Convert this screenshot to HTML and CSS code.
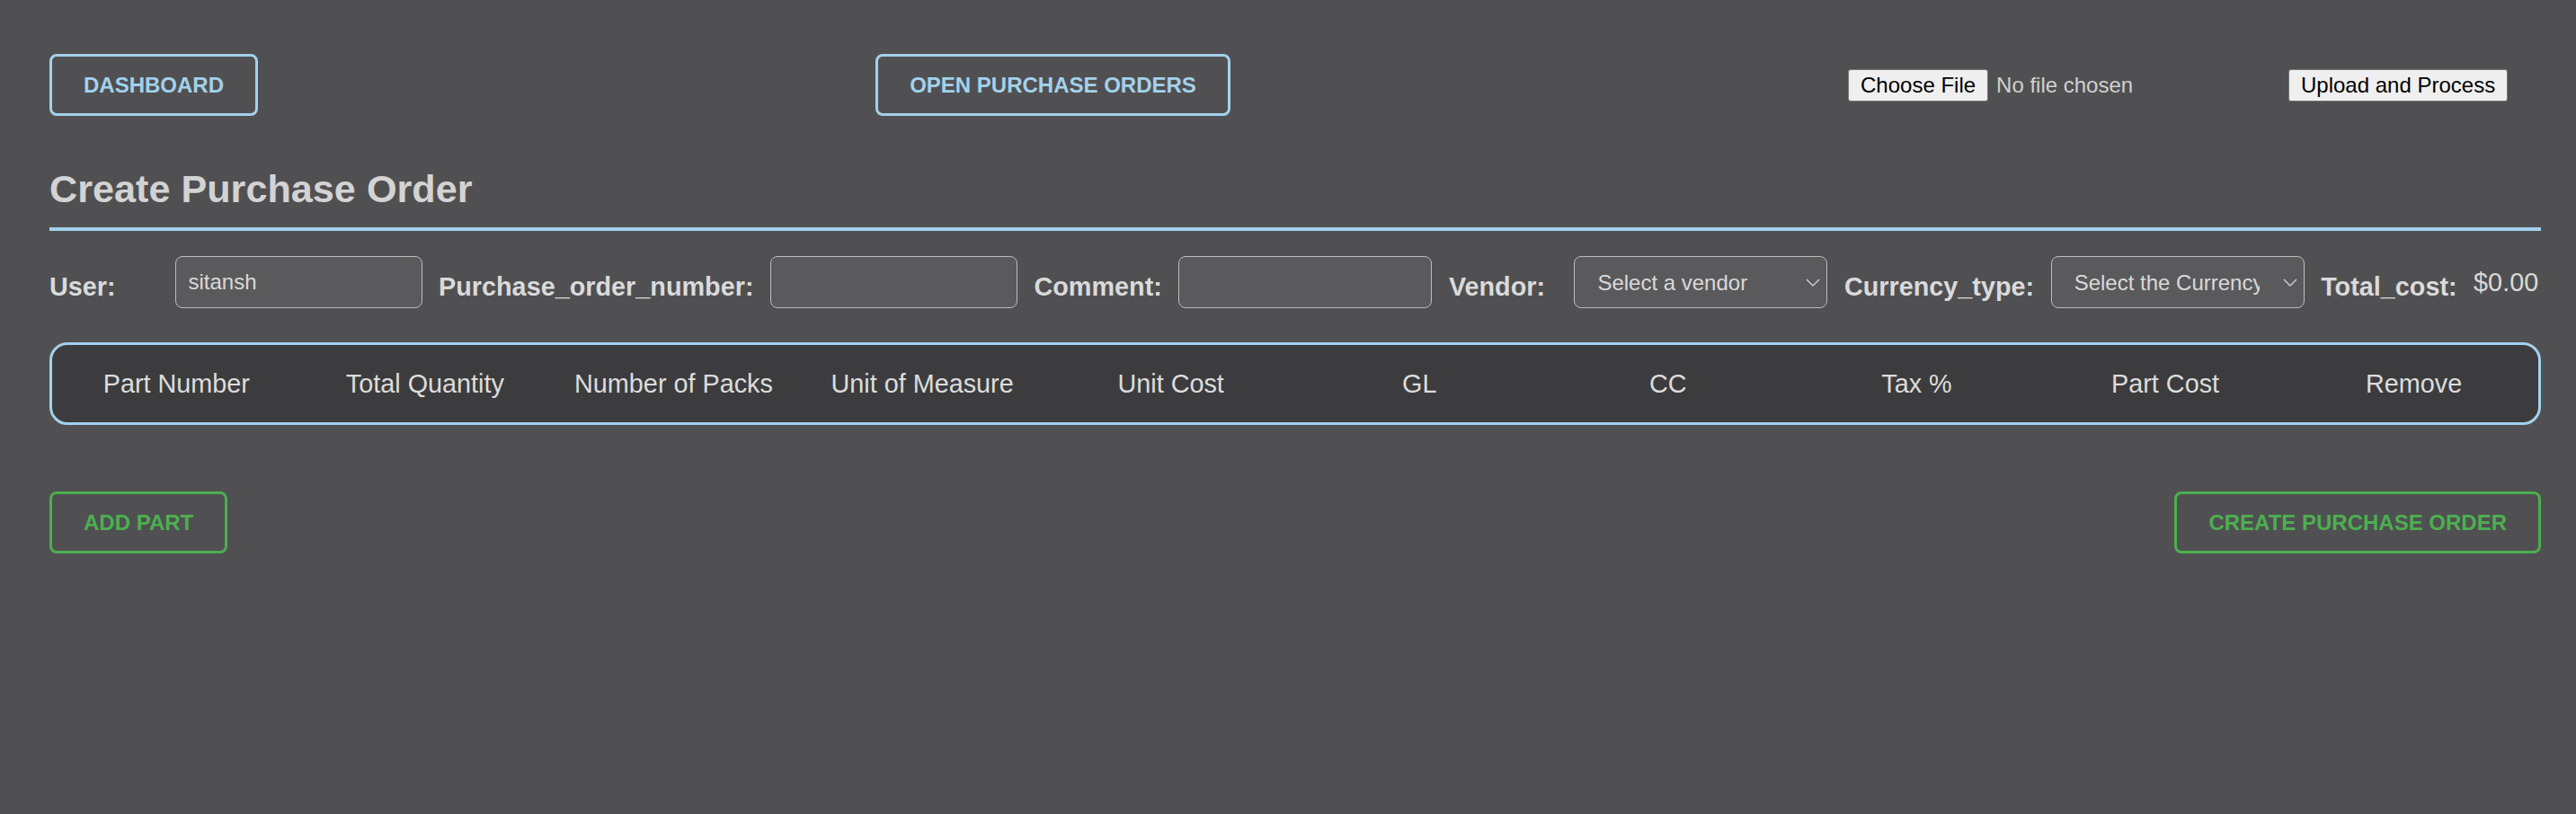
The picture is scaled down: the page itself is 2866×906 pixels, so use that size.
FILE: index.html
```html
<!DOCTYPE html>
<html lang="en">
<head>
<meta charset="utf-8">
<title>Create Purchase Order</title>
<link rel="stylesheet" href="styles.css">
</head>
<body>
<div class="page">
  <header class="topbar">
    <button class="btn btn-blue">DASHBOARD</button>
    <button class="btn btn-blue">OPEN PURCHASE ORDERS</button>
    <form class="upload-form">
      <label class="file-picker">
        <span class="file-btn">Choose File</span>
        <span class="file-name">No file chosen</span>
      </label>
      <button type="button" class="native-btn">Upload and Process</button>
    </form>
  </header>

  <h1 class="title">Create Purchase Order</h1>

  <div class="form-row">
    <label class="field-label min">User:</label>
    <input class="field-input" type="text" value="sitansh">
    <label class="field-label">Purchase_order_number:</label>
    <input class="field-input" type="text">
    <label class="field-label">Comment:</label>
    <input class="field-input wide" type="text">
    <label class="field-label min">Vendor:</label>
    <div class="select-wrap">
      <select class="field-select"><option>Select a vendor</option></select>
      <svg class="chevron" viewBox="0 0 16 9" width="16" height="9"><path d="M1 1 L8 8 L15 1" fill="none" stroke="#cfcfcf" stroke-width="1.4"/></svg>
    </div>
    <label class="field-label">Currency_type:</label>
    <div class="select-wrap">
      <select class="field-select"><option>Select the Currency</option></select>
      <svg class="chevron" viewBox="0 0 16 9" width="16" height="9"><path d="M1 1 L8 8 L15 1" fill="none" stroke="#cfcfcf" stroke-width="1.4"/></svg>
    </div>
    <label class="field-label">Total_cost:</label>
    <span class="total-value">$0.00</span>
  </div>

  <div class="parts-table">
    <table>
      <thead>
        <tr>
          <th>Part Number</th>
          <th>Total Quantity</th>
          <th>Number of Packs</th>
          <th>Unit of Measure</th>
          <th>Unit Cost</th>
          <th>GL</th>
          <th>CC</th>
          <th>Tax %</th>
          <th>Part Cost</th>
          <th>Remove</th>
        </tr>
      </thead>
    </table>
  </div>

  <div class="actions">
    <button class="btn btn-green">ADD PART</button>
    <button class="btn btn-green">CREATE PURCHASE ORDER</button>
  </div>
</div>
</body>
</html>
```

FILE: styles.css
```css
* { box-sizing: border-box; }

html, body {
  margin: 0;
  background: #505052;
}

body {
  font-family: "Liberation Sans", Arial, Helvetica, sans-serif;
  color: #d6d6d6;
  min-height: 906px;
}

.page {
  padding: 60px 39px 0 55px;
}

.topbar {
  display: flex;
  justify-content: space-between;
  align-items: center;
  height: 69px;
}

.btn {
  height: 69px;
  padding: 0 35px;
  background: transparent;
  border: 3px solid;
  border-radius: 8px;
  font-family: "Liberation Sans", Arial, Helvetica, sans-serif;
  font-size: 24px;
  font-weight: bold;
  line-height: 28px;
  white-space: nowrap;
}

.btn-blue {
  color: #a3d1ec;
  border-color: #a3d1ec;
}

.btn-green {
  color: #4caf50;
  border-color: #4caf50;
}

.upload-form {
  display: flex;
  align-items: center;
  width: 771px;
}

.file-picker {
  display: flex;
  align-items: center;
  width: 490px;
}

.file-btn,
.native-btn {
  display: inline-flex;
  align-items: center;
  height: 36px;
  padding: 0 13px;
  background: #efefef;
  color: #000;
  border: 1px solid #767676;
  border-radius: 3px;
  font-family: "Liberation Sans", Arial, Helvetica, sans-serif;
  font-size: 24px;
  white-space: nowrap;
}

.file-name {
  margin-left: 9px;
  font-size: 24px;
  color: #d0d0d0;
  white-space: nowrap;
}

.title {
  margin: 56px 0 0;
  font-size: 43.2px;
  line-height: 50px;
  font-weight: bold;
  color: #d3d3d3;
  padding-bottom: 18px;
  border-bottom: 4px solid #a3d1ec;
}

.form-row {
  display: flex;
  align-items: center;
  gap: 18.5px;
  margin-top: 28px;
  height: 58px;
}

.field-label {
  flex-shrink: 0;
  margin-top: 10px;
  font-size: 28.8px;
  line-height: 33px;
  font-weight: bold;
  color: #dadada;
  white-space: nowrap;
}

.field-label.min {
  min-width: 121px;
}

.field-input,
.field-select {
  flex-shrink: 0;
  width: 275px;
  height: 58px;
  padding: 0 14px;
  background: #5a5a5c;
  border: 1px solid #bdbdbd;
  border-radius: 8px;
  color: #d9d9d9;
  font-family: "Liberation Sans", Arial, Helvetica, sans-serif;
  font-size: 24px;
  outline: none;
}

.field-input.wide {
  width: 282px;
}

.select-wrap {
  position: relative;
  flex-shrink: 0;
  width: 282px;
  height: 58px;
}

.field-select {
  -webkit-appearance: none;
  appearance: none;
  width: 282px;
  padding: 0 49px 0 25px;
}

.chevron {
  position: absolute;
  right: 8px;
  top: 25px;
  pointer-events: none;
}

.total-value {
  flex-shrink: 0;
  font-size: 28.8px;
  line-height: 33px;
  color: #dadada;
  white-space: nowrap;
}

.parts-table {
  margin-top: 38px;
  height: 92px;
  background: #3c3c3e;
  border: 3px solid #a3d1ec;
  border-radius: 20px;
  overflow: hidden;
}

.parts-table table {
  width: 100%;
  height: 100%;
  table-layout: fixed;
  border-collapse: collapse;
}

.parts-table th {
  padding: 0;
  font-size: 28.8px;
  line-height: 33px;
  font-weight: normal;
  color: #dcdcdc;
  text-align: center;
  white-space: nowrap;
}

.actions {
  display: flex;
  justify-content: space-between;
  margin-top: 74px;
}
```
